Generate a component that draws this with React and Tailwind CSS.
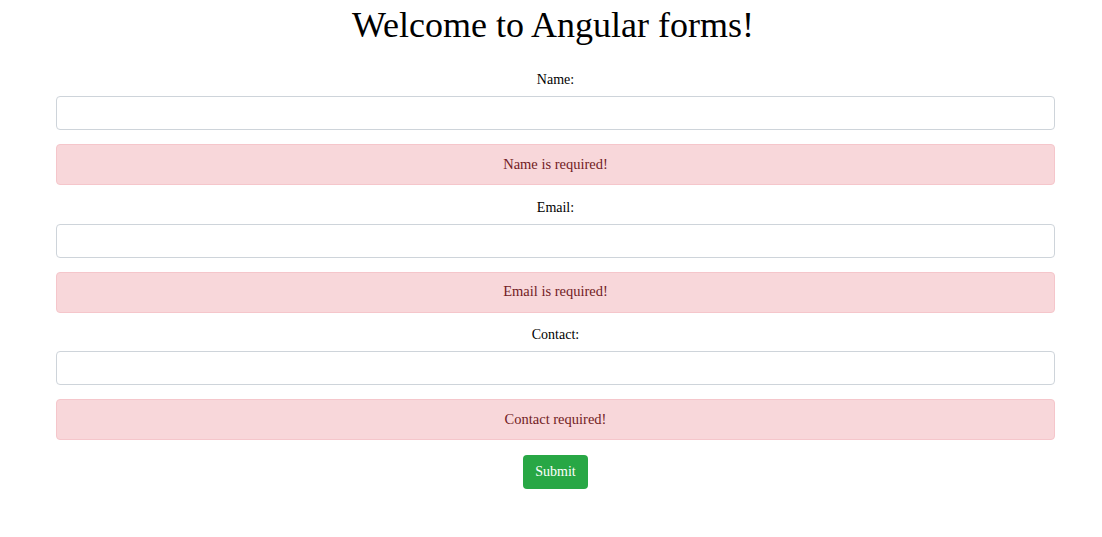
export default function App() {
  const fields = [
    { label: "Name:", msg: "Name is required!" },
    { label: "Email:", msg: "Email is required!" },
    { label: "Contact:", msg: "Contact required!" },
  ];
  return (
    <div className="w-[1102px] h-[537px] bg-white text-black font-['Liberation_Serif',serif]">
      <h1 className="text-center text-[36px] leading-[40px] pt-[5px] m-0 pl-[4px]">Welcome to Angular forms!</h1>
      <div className="px-[56px] pt-[27px] w-[1111px]">
        {fields.map((f) => (
          <div key={f.label} className="flex flex-col">
            <label className="text-center text-[14px] leading-[16px] mb-[8px]">{f.label}</label>
            <input className="h-[34px] w-[999px] border border-[#ced4da] rounded-[4px] bg-white outline-none" />
            <div className="mt-[14px] mb-[14.5px] h-[41px] w-[999px] border border-[#f5c6cb] bg-[#f8d7da] rounded-[4px] text-[#721c24] text-[14.5px] flex items-center justify-center">
              {f.msg}
            </div>
          </div>
        ))}
        <div className="w-[999px] flex justify-center">
          <button className="w-[65px] h-[34px] bg-[#28a745] text-white text-[14px] rounded-[4px]">Submit</button>
        </div>
      </div>
    </div>
  );
}
